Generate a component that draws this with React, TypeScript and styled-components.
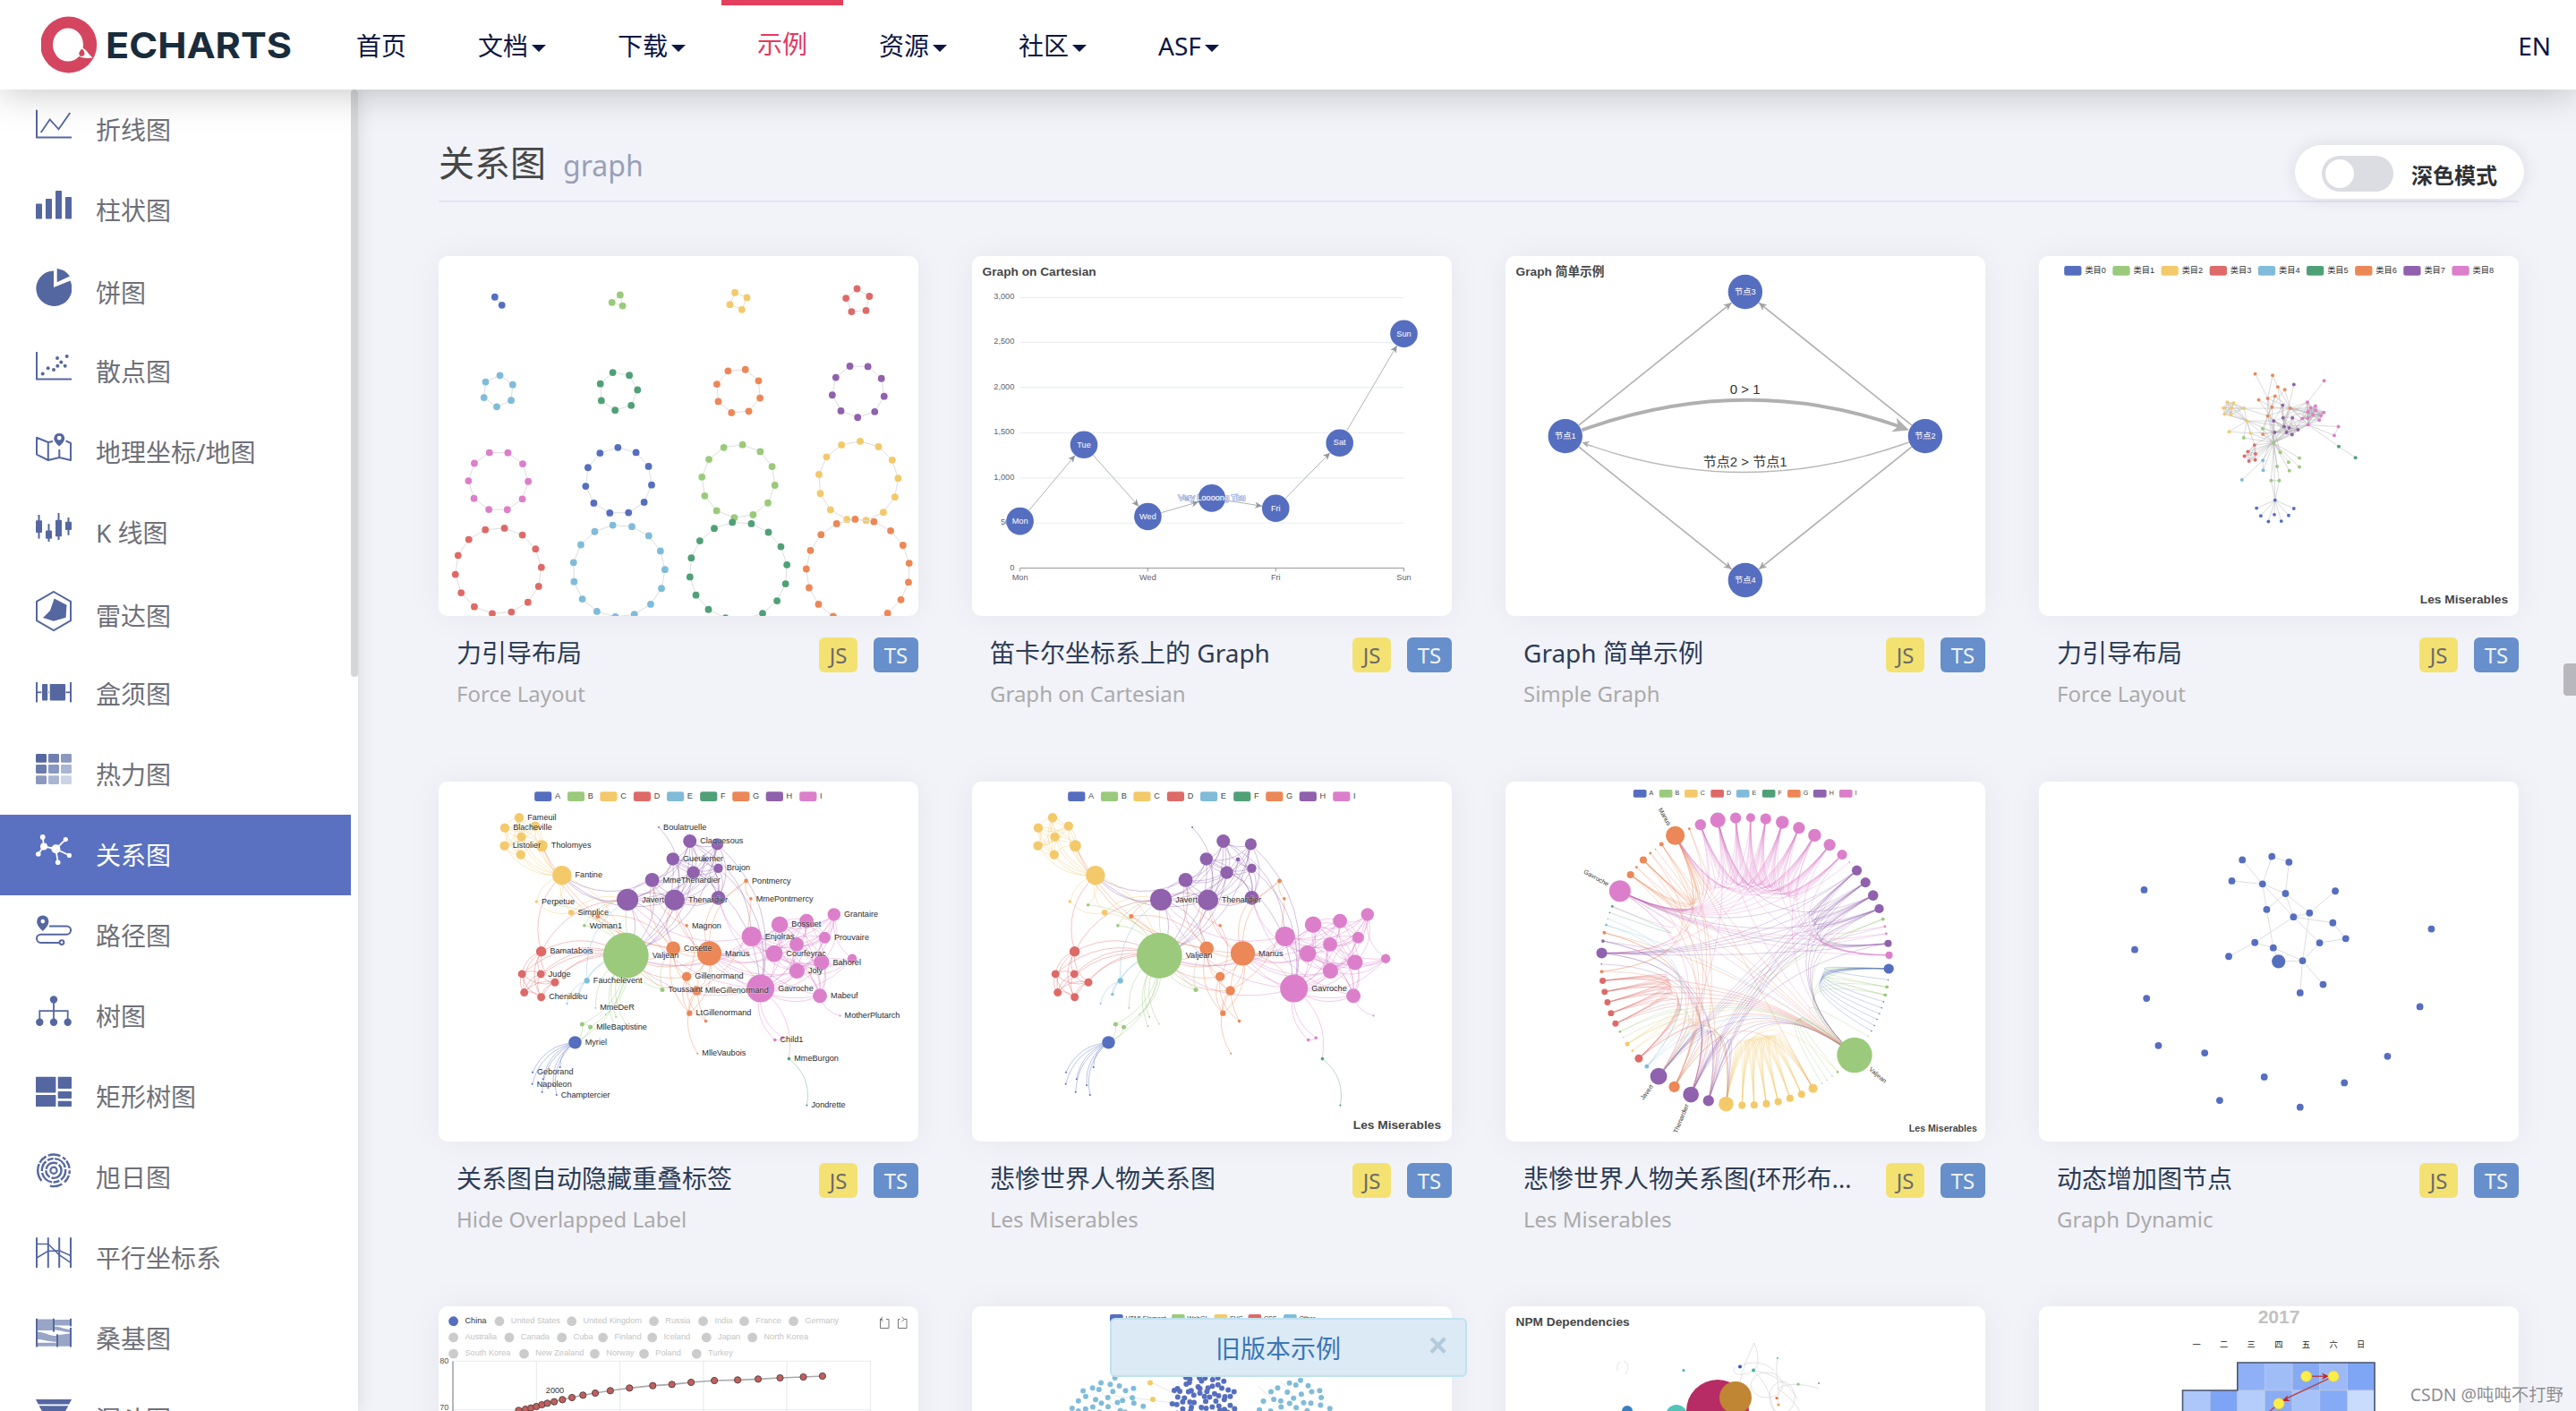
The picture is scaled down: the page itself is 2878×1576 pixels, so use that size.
import React from "react";
import styled, { createGlobalStyle, css } from "styled-components";

const SANS = `"Noto Sans", "Noto Sans CJK SC", sans-serif`;
const CHART_FONT = `"Liberation Sans", "Noto Sans CJK SC", sans-serif`;
const PALETTE = ["#566ebf", "#9bca7c", "#f3c96a", "#de6a68", "#80bcd9", "#50a077", "#ec8757", "#9061ad", "#dc7fca"];
const ICON = "#5567a0";

const GlobalStyle = createGlobalStyle`
  html, body { margin: 0; padding: 0; background: #f2f3f9; overflow: hidden; }
  * { box-sizing: border-box; }
`;

const Page = styled.div`
  display: flex;
  flex-direction: column;
  position: relative;
  width: 2878px;
  height: 1576px;
  overflow: hidden;
  background: #f2f3f9;
  font-family: ${SANS};
`;

/* ---------- header ---------- */

const Header = styled.header`
  display: flex;
  flex: none;
  height: 100px;
  padding: 0 28px 0 46px;
  background: #fff;
  position: relative;
  z-index: 3;
  box-shadow: 0 0 46px rgba(0, 0, 0, 0.26);
`;

const Logo = styled.svg`
  flex: none;
  width: 312px;
  height: 100px;
`;

const Nav = styled.nav`
  display: flex;
  flex: 1;
`;

const NavItem = styled.a<{ $active?: boolean }>`
  display: flex;
  align-items: center;
  height: 100px;
  padding: 2px 40px 0;
  font-size: 28px;
  line-height: 40px;
  letter-spacing: 0;
  color: #0d1642;
  white-space: nowrap;
  ${(p) =>
    p.$active &&
    css`
      color: #e43961;
      padding-top: 0;
      padding-bottom: 8px;
      border-top: 6px solid #e4405e;
    `}
`;

const Caret = styled.i`
  margin: 6px 0 0 4px;
  border: 8px solid transparent;
  border-top-color: currentColor;
  border-bottom: 0;
`;

const Lang = styled.a`
  display: flex;
  align-items: center;
  padding-top: 2px;
  font-size: 28px;
  color: #0d1642;
`;

/* ---------- sidebar ---------- */

const Body = styled.div`
  display: flex;
  flex: 1;
  min-height: 0;
`;

const Sidebar = styled.aside`
  display: flex;
  flex: none;
  width: 400px;
  background: #fff;
  overflow: visible;
  position: relative;
  z-index: 1;
  box-shadow: 0 0 20px rgba(0, 0, 0, 0.12);
`;

const Menu = styled.ul`
  list-style: none;
  margin: 0;
  padding: 0;
  width: 392px;
  height: 1476px;
  overflow: hidden;
`;

const MenuItem = styled.li<{ $active?: boolean; $drop?: number }>`
  display: flex;
  align-items: center;
  height: 90px;
  padding-left: 40px;
  font-size: 28px;
  line-height: 40px;
  color: ${(p) => (p.$active ? "#fff" : "#6e7079")};
  background: ${(p) => (p.$active ? "#5a70c1" : "transparent")};
  span {
    margin-left: 27px;
    padding-top: ${(p) => 2 * (p.$drop || 0)}px;
  }
`;

const MenuIcon = styled.svg`
  flex: none;
  width: 40px;
  height: 90px;
`;

const MenuScroll = styled.div`
  width: 8px;
  height: 656px;
  border-radius: 4px;
  background: #d6d6d6;
`;

/* ---------- content ---------- */

const Main = styled.main`
  flex: 1;
  padding: 0 64px 0 90px;
  min-width: 0;
`;

const SectionTitle = styled.h2`
  display: flex;
  align-items: baseline;
  height: 126px;
  margin: 0 0 60px;
  padding-top: 52px;
  border-bottom: 2px solid #e3e4f3;
  font-weight: 400;
  font-size: 40px;
  line-height: 60px;
  color: #464646;
  small {
    margin-left: 19px;
    font-size: 32px;
    color: #98a0b8;
  }
`;

const Grid = styled.div`
  display: grid;
  grid-template-columns: repeat(4, 536px);
  grid-auto-rows: 586.5px;
  column-gap: 60px;
`;

const Card = styled.article`
  display: flex;
  flex-direction: column;
`;

const Thumb = styled.svg`
  display: block;
  width: 536px;
  height: 402px;
  border-radius: 10px;
  background: #fff;
  box-shadow: 0 0 40px rgba(0, 0, 0, 0.05);
  font-family: ${CHART_FONT};
`;

const Caption = styled.div`
  display: flex;
  align-items: flex-start;
  padding: 24px 0 0 20px;
`;

const Titles = styled.div`
  flex: 1;
  min-width: 0;
`;

const Title = styled.div`
  width: 368px;
  overflow: hidden;
  text-overflow: ellipsis;
  white-space: nowrap;
  font-size: 28px;
  line-height: 38px;
  color: #2c3c55;
  margin-top: -2px;
`;

const Subtitle = styled.div`
  margin-top: 9px;
  font-size: 24px;
  line-height: 36px;
  color: #aaa;
`;

const Badge = styled.span<{ $kind: "js" | "ts" }>`
  flex: none;
  width: ${(p) => (p.$kind === "js" ? 43 : 50)}px;
  height: 39px;
  margin-left: ${(p) => (p.$kind === "js" ? 0 : 18)}px;
  border-radius: 6px;
  font-size: 24px;
  line-height: 39px;
  text-align: center;
  color: ${(p) => (p.$kind === "js" ? "#6b6b6b" : "#f0f3f8")};
  background: ${(p) => (p.$kind === "js" ? "#f3e272" : "#668fcb")};
`;

/* ---------- overlays ---------- */

const DarkMode = styled.label`
  position: absolute;
  left: 2564px;
  top: 162px;
  z-index: 2;
  display: flex;
  align-items: center;
  width: 256px;
  height: 60px;
  padding-left: 30px;
  border-radius: 30px;
  background: #fff;
  box-shadow: 0 0 20px rgba(0, 0, 0, 0.1);
  font-size: 24px;
  font-weight: 600;
  color: #2f3033;
  span {
    margin: 5px 0 0 20px;
  }
`;

const Switch = styled.i`
  width: 80px;
  height: 40px;
  padding: 4px;
  margin-top: 4px;
  border-radius: 20px;
  background: #dcdde2;
  &::after {
    content: "";
    display: block;
    width: 32px;
    height: 32px;
    border-radius: 50%;
    background: #fff;
  }
`;

const PageScroll = styled.div`
  position: absolute;
  right: 0;
  top: 741px;
  width: 14px;
  height: 36px;
  border-radius: 4px 0 0 4px;
  background: #b8b8bc;
`;

const Notice = styled.div`
  position: absolute;
  left: 1240px;
  top: 1472px;
  display: flex;
  align-items: center;
  justify-content: space-between;
  width: 399px;
  height: 66px;
  padding: 0 20px 0 116px;
  border: 2px solid #bfe3ee;
  border-radius: 6px;
  background: #dceaf6;
  font-size: 28px;
  color: #3b77b4;
`;

const Close = styled.b`
  font: 700 36px/40px "Liberation Sans", sans-serif;
  margin-top: -4px;
  color: #b3cadb;
`;

const Watermark = styled.div`
  position: absolute;
  right: 14px;
  top: 1542px;
  font-size: 19.4px;
  line-height: 32px;
  color: #8d8d93;
  text-shadow: 0 0 2px #fff;
  white-space: nowrap;
`;

/* ---------- sidebar icons, each on a 40 x 90 cell ---------- */

const range = (n: number) => Array.from({ length: n }, (_, i) => i);

const HEAT = [
  "#5567a0", "#6e7eb0", "#8b99c1",
  "#6b7bae", "#8797c1", "#a9b5d2",
  "#8b99c1", "#a9b5d2", "#ccd3e4",
];

const icons: Record<string, React.ReactNode> = {
  line: (
    <g fill="none" stroke={ICON} strokeWidth="2">
      <path d="M1 22.8V53.4H40" />
      <path d="M5.7 48 15.7 33.5 25.5 44.3 38.3 26" strokeWidth="1.8" />
    </g>
  ),
  bar: (
    <g fill={ICON}>
      <rect x="0" y="37.5" width="7" height="17" rx=".8" />
      <rect x="11" y="32" width="7" height="22.5" rx=".8" />
      <rect x="22" y="23" width="7" height="31.5" rx=".8" />
      <rect x="33" y="30" width="7" height="24.5" rx=".8" />
    </g>
  ),
  pie: (
    <g fill={ICON}>
      <path d="M20 22.4V41L38.4 33.6A20 19.8 0 1 1 20 22.4Z" />
      <path d="M23.7 20A20.5 20.5 0 0 1 38 28.4L23.7 35.2Z" />
    </g>
  ),
  scatter: (
    <g fill={ICON}>
      <path d="M1 23V53.5H40" fill="none" stroke={ICON} strokeWidth="2" />
      {[[7.7, 47.5], [13.7, 41.2], [20, 43], [24, 30], [28.3, 34.4], [24.3, 38.7], [32.7, 38.7], [34.7, 28]].map(([x, y]) => (
        <circle key={x + "," + y} cx={x} cy={y} r="2" />
      ))}
    </g>
  ),
  map: (
    <g fill="none" stroke={ICON} strokeWidth="2" strokeLinejoin="round">
      <path d="M1 28.8 13.8 34V54L1 47.6ZM13.8 34 19 33M13.8 54 26.3 51 39 54V35L33.5 32.4M26.3 42V51" />
      <path d="M26.2 38.6C22 35 20.3 32.4 20.3 29.3A6 6 0 0 1 32.2 29.3C32.2 32.4 30.4 35 26.2 38.6ZM26.2 26.8A2.4 2.4 0 1 0 26.2 31.6 2.4 2.4 0 1 0 26.2 26.8Z" fill={ICON} fillRule="evenodd" stroke="none" />
    </g>
  ),
  candle: (
    <g fill={ICON}>
      {[[0, 25, 51.6, 31.3, 44.9], [11, 35.2, 55, 42.4, 51.8], [22, 23, 53, 30.8, 49.2], [33, 28, 47.8, 32.7, 42]].map(([x, a, b, c, d]) => (
        <g key={x}>
          <rect x={x + 2.5} y={a} width="2" height={b - a} />
          <rect x={x} y={c} width="7" height={d - c} rx=".8" />
        </g>
      ))}
    </g>
  ),
  radar: (
    <g fill={ICON}>
      <path d="M20 21 39 31.8V53.2L20 64 1 53.2V31.8Z" fill="none" stroke={ICON} strokeWidth="2" />
      <path d="M20.6 28.6 34.5 35.8 33.6 49.8 20 53.8 8 50 16 42Z" />
    </g>
  ),
  box: (
    <g fill={ICON}>
      <rect x="0" y="32" width="2" height="22.4" />
      <rect x="38" y="32" width="2" height="22.4" />
      <rect x="0" y="42.4" width="40" height="1.8" />
      <rect x="6.4" y="33" width="7.6" height="20" fill="#fff" />
      <rect x="7" y="34" width="6.2" height="18.4" rx=".8" />
      <rect x="14.6" y="33" width="19" height="20" fill="#fff" />
      <rect x="15.7" y="34" width="17.4" height="18.4" rx=".8" />
    </g>
  ),
  heat: (
    <g>
      {HEAT.map((c, i) => (
        <rect key={i} x={(i % 3) * 14} y={22 + Math.floor(i / 3) * 12.1} width="12" height="9.8" rx="1.4" fill={c} />
      ))}
    </g>
  ),
  graph: (
    <g fill="#fff" stroke="#fff" strokeWidth="1.8">
      <path d="M7.7 24.7 9 35.4 2.7 44M9 35.4 22.3 38.2 33.3 27.6M22.3 38.2 37.7 45.5M22.3 38.2 24.7 53.2" fill="none" />
      <g stroke="none">
        <circle cx="7.7" cy="24.9" r="2.9" />
        <circle cx="9" cy="35.4" r="4" />
        <circle cx="2.8" cy="44" r="2.8" />
        <circle cx="22.4" cy="38.2" r="5" />
        <circle cx="33.3" cy="27.6" r="2.6" />
        <circle cx="37.4" cy="45.4" r="2.6" />
        <circle cx="24.7" cy="53.2" r="2.8" />
      </g>
    </g>
  ),
  route: (
    <g fill="none" stroke={ICON} strokeWidth="2">
      <path d="M15 34.4H34.4A4.6 4.6 0 0 1 34.4 43.7H5.6A4.6 4.6 0 0 0 5.6 52.9H26.5" />
      <circle cx="29" cy="52.6" r="2.4" />
      <path d="M7.8 40C3.6 36 1.2 33.2 1.2 29A6.6 6.6 0 0 1 14.4 29C14.4 33.2 12 36 7.8 40ZM7.8 26.8A2.3 2.3 0 1 0 7.8 31.4 2.3 2.3 0 1 0 7.8 26.8Z" fill={ICON} fillRule="evenodd" stroke="none" />
    </g>
  ),
  tree: (
    <g fill={ICON}>
      <path d="M20 26V52M4.3 52V39.2H35.7V52" fill="none" stroke={ICON} strokeWidth="1.8" />
      <circle cx="20" cy="26.5" r="4.2" />
      <circle cx="4.3" cy="51.7" r="4.2" />
      <circle cx="20" cy="51.7" r="4.2" />
      <circle cx="35.7" cy="51.7" r="4.2" />
    </g>
  ),
  treemap: (
    <g fill={ICON}>
      <rect x="0" y="22.8" width="22.4" height="17.8" rx=".8" />
      <rect x="0" y="43" width="22.4" height="13" rx=".8" />
      <rect x="24.7" y="22.8" width="15.3" height="13.2" rx=".8" />
      <rect x="24.7" y="39" width="15.3" height="8" rx=".8" />
      <rect x="24.7" y="49.8" width="15.3" height="6.2" rx=".8" />
    </g>
  ),
  sunburst: (
    <g fill="none" stroke={ICON} strokeWidth="2.4">
      <circle cx="20" cy="37.3" r="3.6" strokeWidth="2.2" />
      <circle cx="20" cy="37.3" r="8.6" strokeDasharray="16 2 9 1.5" />
      <circle cx="20" cy="37.3" r="13.2" strokeDasharray="12 2 7 1.5 16 2" />
      <circle cx="20" cy="37.3" r="17.8" strokeDasharray="4 1.6 9 3.4 14 11 20 1.6 10 2.4 14 3" />
    </g>
  ),
  parallel: (
    <g fill="none" stroke={ICON} strokeWidth="2">
      <path d="M1 22.2V56M13.8 22.2V56M26.2 22.2V56M39 22.2V56" />
      <path d="M1 29.5H13.8L26.2 41.6 39 50.4M1 45 13.8 37.4 26.2 36.8 39 42.4" strokeWidth="1.6" />
    </g>
  ),
  sankey: (
    <g>
      <path d="M1 23.5H20V36H1ZM20 24H39V30.6H20ZM1 37.4C10 37.4 14 42 24 42V48.8C14 48.8 10 46 1 46ZM20 31.6C28 31.6 31 35 39 35V38.2C31 38.2 28 35.6 20 35.6ZM24 41.2C30 41.2 33 39.6 39 39.6V53.8H24ZM1 49.8H24V53.8H1Z" fill="#98a5c6" />
      <path d="M1 22.8V54.6M20 22.8V37.4M24 40.2V54.6M39 22.8V31.6M39 33V54.6" stroke={ICON} strokeWidth="2" />
    </g>
  ),
  funnel: (
    <g fill={ICON}>
      <path d="M0 23H40L37.2 28.4H2.8Z" />
      <path d="M3.6 30.2H36.4L32 38H8Z" />
      <path d="M9 40H31L20 56Z" />
    </g>
  ),
};

const MENU: { label: string; icon: string; active?: boolean; drop?: number }[] = [
  { label: "折线图", icon: "line" },
  { label: "柱状图", icon: "bar" },
  { label: "饼图", icon: "pie", drop: 2 },
  { label: "散点图", icon: "scatter" },
  { label: "地理坐标/地图", icon: "map" },
  { label: "K 线图", icon: "candle" },
  { label: "雷达图", icon: "radar", drop: 3 },
  { label: "盒须图", icon: "box" },
  { label: "热力图", icon: "heat" },
  { label: "关系图", icon: "graph", active: true },
  { label: "路径图", icon: "route" },
  { label: "树图", icon: "tree" },
  { label: "矩形树图", icon: "treemap" },
  { label: "旭日图", icon: "sunburst" },
  { label: "平行坐标系", icon: "parallel" },
  { label: "桑基图", icon: "sankey" },
  { label: "漏斗图", icon: "funnel" },
];

/* ---------- chart data ---------- */

type Pt = [number, number];
const project = (ox: number, oy: number, kx: number, ky: number) => (x: number, y: number): Pt => [(x - ox) / kx, (y - oy) / ky];
const top = project(28, 46, 2.8, 2.9037);
const mid = project(28, 35, 2.8, 2.9037);
const topRight = project(26, 342, 2.5705, 2.3403);
const midRight = project(26, 35, 2.5705, 2.9037);

// name, category, radius, free layout x/y, ring layout x/y, force layout x/y
type Person = [string, number, number, number, number, number, number, number, number];
const PEOPLE: Person[] = [
  ["Myriel", 0, 7.2, 455, 881, 1227, 642, 704, 980],
  ["Napoleon", 0, 1, 321, 1016, 1225, 678, 651, 1001],
  ["MlleBaptistine", 1, 2.5, 503, 831, 1221, 701, 693, 929],
  ["MmeMagloire", 1, 2.5, 477, 822, 1216, 727, 716, 929],
  ["CountessDeLo", 0, 1, 408, 961, 1211, 749, 663, 1021],
  ["Geborand", 0, 1, 322, 978, 1205, 769, 685, 1036],
  ["Champtercier", 0, 1, 397, 1051, 1198, 788, 702, 1018],
  ["Cravatte", 0, 1, 355, 1000, 1190, 806, 722, 1035],
  ["Count", 0, 1, 387, 1020, 1182, 826, 743, 1020],
  ["OldMan", 0, 1, 352, 1042, 1173, 844, 758, 1002],
  ["Labarre", 1, 0.8, 551, 791, 1162, 861, 743, 881],
  ["Valjean", 1, 25.4, 614, 599, 1120, 922, 700, 830],
  ["Marguerite", 1, 1.8, 391, 435, 1067, 977, 614, 817],
  ["MmeDeR", 1, 0.9, 519, 769, 1050, 990, 774, 870],
  ["Isabeau", 1, 0.9, 583, 798, 1034, 1003, 774, 893],
  ["Gervais", 1, 0.9, 578, 828, 1018, 1014, 745, 903],
  ["Tholomyes", 2, 6.5, 351, 243, 990, 1030, 615, 740],
  ["Listolier", 2, 5.2, 234, 243, 954, 1049, 567, 724],
  ["Fameuil", 2, 5.2, 280, 152, 918, 1062, 585, 726],
  ["Blacheville", 2, 5.2, 235, 185, 881, 1073, 556, 739],
  ["Favourite", 2, 5.2, 330, 179, 844, 1080, 579, 740],
  ["Dahlia", 2, 5.2, 287, 214, 806, 1084, 559, 755],
  ["Zephine", 2, 5.2, 285, 272, 768, 1085, 577, 757],
  ["Fantine", 2, 10.7, 414, 339, 718, 1081, 623, 773],
  ["MmeThenardier", 7, 7.9, 696, 354, 663, 1070, 700, 773],
  ["Thenardier", 7, 11.4, 766, 419, 608, 1050, 730, 788],
  ["Cosette", 6, 7.9, 762, 576, 556, 1025, 683, 760],
  ["Javert", 7, 12.1, 619, 418, 507, 991, 703, 803],
  ["Fauchelevent", 4, 3.1, 492, 681, 470, 959, 669, 876],
  ["Bamatabois", 3, 5.8, 349, 586, 445, 933, 645, 836],
  ["Perpetue", 2, 1.7, 334, 424, 425, 908, 572, 801],
  ["Simplice", 2, 3.3, 443, 460, 409, 886, 634, 805],
  ["Scaufflaire", 1, 0.8, 613, 821, 396, 865, 710, 892],
  ["Woman1", 1, 1.8, 484, 502, 386, 846, 719, 855],
  ["Judge", 3, 4.5, 348, 659, 372, 820, 626, 853],
  ["Champmathieu", 3, 4.5, 289, 659, 358, 786, 648, 859],
  ["Brevet", 3, 4.5, 392, 686, 347, 751, 616, 865],
  ["Chenildieu", 3, 4.5, 349, 734, 338, 717, 629, 878],
  ["Cochepaille", 3, 4.5, 296, 719, 332, 681, 647, 875],
  ["Pontmercy", 6, 2.4, 990, 357, 329, 651, 712, 684],
  ["Boulatruelle", 7, 1, 717, 183, 328, 627, 758, 678],
  ["Eponine", 7, 7.8, 903, 412, 329, 591, 727, 765],
  ["Anzelma", 7, 2.4, 860, 287, 333, 552, 726, 732],
  ["Woman2", 6, 2.5, 526, 472, 337, 525, 669, 808],
  ["MotherInnocent", 4, 1.7, 467, 725, 343, 500, 670, 902],
  ["Gribier", 4, 1, 430, 755, 348, 480, 609, 927],
  ["Jondrette", 5, 1.1, 1180, 1085, 354, 460, 935, 869],
  ["MmeBurgon", 5, 1.8, 1124, 934, 362, 440, 887, 840],
  ["Gavroche", 8, 15.5, 1035, 706, 386, 390, 799, 783],
  ["Gillenormand", 6, 5.2, 804, 667, 419, 337, 695, 737],
  ["Magnon", 6, 1.8, 804, 502, 438, 313, 657, 718],
  ["MlleGillenormand", 6, 5.2, 836, 713, 459, 289, 683, 714],
  ["MmePontmercy", 6, 1.8, 1005, 415, 481, 267, 697, 654],
  ["MlleVaubois", 6, 1, 838, 917, 497, 254, 647, 650],
  ["LtGillenormand", 6, 3.2, 813, 786, 516, 238, 704, 708],
  ["Marius", 6, 13.6, 875, 592, 559, 210, 748, 740],
  ["BaronessT", 6, 1.8, 864, 812, 603, 188, 732, 691],
  ["Mabeuf", 8, 8, 1221, 730, 638, 175, 797, 724],
  ["Enjolras", 8, 11, 1007, 537, 692, 160, 782, 767],
  ["Combeferre", 8, 7.9, 1148, 563, 748, 153, 798, 766],
  ["Prouvaire", 8, 6.5, 1236, 541, 795, 152, 820, 734],
  ["Feuilly", 8, 7.9, 1179, 487, 842, 156, 806, 739],
  ["Courfeyrac", 8, 9.3, 1078, 593, 894, 167, 798, 749],
  ["Bahorel", 8, 8.6, 1226, 621, 946, 185, 821, 745],
  ["Bossuet", 8, 9.3, 1095, 499, 995, 209, 813, 757],
  ["Joly", 8, 8.6, 1149, 649, 1042, 240, 836, 759],
  ["Grantaire", 8, 7.2, 1265, 466, 1081, 272, 844, 751],
  ["MotherPlutarch", 8, 1, 1284, 794, 1104, 296, 845, 668],
  ["Gueulemer", 7, 7.2, 761, 286, 1127, 323, 737, 803],
  ["Babet", 7, 7.2, 825, 330, 1154, 362, 745, 791],
  ["Claquesous", 7, 7.5, 814, 228, 1178, 404, 753, 809],
  ["Montparnasse", 7, 6.6, 900, 238, 1197, 447, 770, 796],
  ["Toussaint", 1, 2.5, 728, 710, 1209, 481, 668, 793],
  ["Child1", 8, 1.8, 1080, 873, 1215, 505, 886, 788],
  ["Child2", 8, 1.8, 1104, 866, 1219, 528, 874, 811],
  ["Brujon", 7, 5.2, 903, 316, 1225, 560, 754, 765],
  ["MmeHucheloup", 8, 5.2, 1322, 609, 1228, 598, 831, 771],
];

const TARGETS: Record<number, number[]> = {
  1: [0], 2: [0], 3: [0, 2], 4: [0], 5: [0], 6: [0], 7: [0], 8: [0], 9: [0],
  11: [10, 3, 2, 0], 12: [11], 13: [11], 14: [11], 15: [11],
  17: [16], 18: [16, 17], 19: [16, 17, 18], 20: [16, 17, 18, 19], 21: [16, 17, 18, 19, 20],
  22: [16, 17, 18, 19, 20, 21], 23: [16, 17, 18, 19, 20, 21, 22, 12, 11],
  24: [23, 11], 25: [24, 23, 11], 26: [24, 11, 16, 25], 27: [11, 23, 25, 24, 26],
  28: [11, 27], 29: [23, 27, 11], 30: [23], 31: [30, 11, 23, 27], 32: [11], 33: [11, 27],
  34: [11, 29], 35: [11, 34, 29], 36: [35, 34, 11, 29], 37: [34, 35, 36, 11, 29], 38: [34, 35, 36, 37, 11, 29],
  39: [25], 40: [25], 41: [24, 25], 42: [41, 25, 24], 43: [11, 26, 27], 44: [28, 11], 45: [28],
  47: [46], 48: [47, 25, 27, 11], 49: [26, 11], 50: [49, 24], 51: [49, 26, 11], 52: [51, 39], 53: [51],
  54: [51, 49, 26], 55: [51, 49, 39, 54, 26, 11, 16, 25, 41, 48], 56: [49, 55],
  57: [55, 41, 48], 58: [55, 48, 27, 57, 11], 59: [58, 55, 48, 57], 60: [48, 58, 59],
  61: [48, 58, 60, 59, 57, 55], 62: [55, 58, 59, 48, 57, 41, 61, 60], 63: [59, 48, 62, 57, 58, 61, 60, 55],
  64: [55, 62, 48, 63, 58, 61, 60, 59, 57, 11], 65: [63, 64, 48, 62, 58, 61, 60, 59, 57, 55],
  66: [64, 58, 59, 62, 65, 48, 63, 61, 60], 67: [57], 68: [25, 11, 24, 27, 48, 41],
  69: [25, 11, 24, 27, 41, 68], 70: [69, 68, 25, 11, 24, 27, 41, 58],
  71: [27, 69, 68, 70, 11, 48, 41, 25], 72: [26, 27, 11], 73: [48], 74: [48, 73],
  75: [69, 68, 25, 48, 41, 70, 71], 76: [64, 65, 66, 63, 62, 48, 58],
};
const LINKS = Object.entries(TARGETS).flatMap(([s, ts]) => ts.map((t) => [Number(s), t]));

const LABELLED = new Set(
  ("Fameuil Blacheville Listolier Tholomyes Fantine Perpetue Simplice Woman1 Bamatabois Judge Chenildieu Fauchelevent MmeDeR " +
    "MlleBaptistine Myriel Geborand Napoleon Champtercier Toussaint MlleGillenormand Gillenormand LtGillenormand MlleVaubois " +
    "Cosette Valjean Marius Magnon Javert Thenardier MmeThenardier Brujon Gueulemer Claquesous Boulatruelle Pontmercy " +
    "MmePontmercy Grantaire Bossuet Enjolras Prouvaire Courfeyrac Joly Bahorel Gavroche Mabeuf MotherPlutarch Child1 MmeBurgon Jondrette").split(" ")
);
const MAJOR = new Set(["Valjean", "Javert", "Thenardier", "Marius", "Gavroche"]);

/* ---------- charts ---------- */

const ChartTitle = styled.text`
  font-weight: 700;
  fill: #464646;
`;

const RINGS: { n: number; r: number; c: Pt; a: Pt }[] = [
  { n: 2, r: 6, c: [215, 192], a: [204, 179] },
  { n: 3, r: 7.2, c: [590, 192], a: [596, 172] },
  { n: 4, r: 10.3, c: [966, 192], a: [955, 164] },
  { n: 5, r: 13.8, c: [1340, 192], a: [1337, 152] },
  { n: 6, r: 17.6, c: [215, 484], a: [220, 433] },
  { n: 7, r: 21.6, c: [590, 484], a: [573, 424] },
  { n: 8, r: 25.3, c: [966, 484], a: [988, 413] },
  { n: 9, r: 29.4, c: [1341, 484], a: [1339, 570] },
  { n: 10, r: 33.4, c: [215, 776], a: [309, 777] },
  { n: 11, r: 37.2, c: [591, 775], a: [589, 667] },
  { n: 12, r: 41, c: [966, 776], a: [979, 657] },
  { n: 13, r: 44.6, c: [1341, 776], a: [1347, 646] },
  { n: 14, r: 48.2, c: [215, 1067], a: [234, 929] },
  { n: 15, r: 51.5, c: [592, 1067], a: [573, 919] },
  { n: 16, r: 54.6, c: [966, 1067], a: [947, 910] },
  { n: 17, r: 57.8, c: [1340, 1067], a: [1331, 900] },
];

const RingsChart = () => (
  <Thumb viewBox="0 0 536 402">
    {RINGS.map(({ n, r, c, a }, k) => {
      const [cx, cy] = top(...c);
      const [ax, ay] = top(...a);
      const start = Math.atan2(ay - cy, ax - cx);
      const pts = range(n).map((i) => {
        const t = start + (i * 2 * Math.PI) / n;
        return [cx + r * Math.cos(t), cy + r * Math.sin(t)];
      });
      return (
        <g key={n} fill={PALETTE[k % 9]}>
          <polygon points={pts.map((p) => p.join(",")).join(" ")} fill="none" stroke="#ddd" strokeWidth="1" />
          {pts.map(([x, y], i) => (
            <circle key={i} cx={x} cy={y} r="3.9" />
          ))}
        </g>
      );
    })}
  </Thumb>
);

const Arrow = ({ x, y, angle, size, fill }: { x: number; y: number; angle: number; size: number; fill: string }) => (
  <path
    d={`M0 0L${-size} ${-size * 0.46}L${-size * 0.72} 0L${-size} ${size * 0.46}Z`}
    transform={`translate(${x} ${y}) rotate(${angle})`}
    fill={fill}
  />
);

const WEEK: [string, number, number][] = [
  ["Mon", 178, 906], ["Tue", 378, 658], ["Wed", 578, 891], ["Very Loooong Thu", 778, 831],
  ["Fri", 978, 864], ["Sat", 1178, 652], ["Sun", 1379, 298],
];
const Y_TICKS: [string, number][] = [
  ["3,000", 181], ["2,500", 326], ["2,000", 472], ["1,500", 619], ["1,000", 766], ["500", 912], ["0", 1058],
];
const X_TICKS: [string, number][] = [["Mon", 53.6], ["Wed", 196.4], ["Fri", 339.3], ["Sun", 482.5]];

const trimmed = (a: Pt, b: Pt, r: number) => {
  const d = Math.hypot(b[0] - a[0], b[1] - a[1]);
  const u: Pt = [(b[0] - a[0]) / d, (b[1] - a[1]) / d];
  return {
    from: [a[0] + u[0] * r, a[1] + u[1] * r] as Pt,
    to: [b[0] - u[0] * r, b[1] - u[1] * r] as Pt,
    angle: (Math.atan2(u[1], u[0]) * 180) / Math.PI,
  };
};

const CartesianChart = () => (
  <Thumb viewBox="0 0 536 402" fontSize="9.2">
    <ChartTitle x="11.6" y="22.4" fontSize="13.7">Graph on Cartesian</ChartTitle>
    {Y_TICKS.map(([label, v]) => {
      const y = top(0, v)[1];
      return (
        <g key={label}>
          <line x1="53.6" x2="482.5" y1={y} y2={y} stroke={label === "0" ? "#999" : "#ebedf2"} strokeWidth="1.2" />
          <text x="47.3" y={y + 2} textAnchor="end" fill="#5f616a">{label}</text>
        </g>
      );
    })}
    {X_TICKS.map(([d, x]) => (
      <g key={d}>
        <line x1={x} x2={x} y1="348.5" y2="352.4" stroke="#999" />
        <text x={x} y="361.8" textAnchor="middle" fill="#5f616a">{d}</text>
      </g>
    ))}
    {WEEK.slice(1).map(([d, x, y], i) => {
      const t = trimmed(top(WEEK[i][1], WEEK[i][2]), top(x, y), 15.4);
      return (
        <g key={d}>
          <line x1={t.from[0]} y1={t.from[1]} x2={t.to[0]} y2={t.to[1]} stroke="#b0b2b2" strokeWidth="1" />
          <Arrow x={t.to[0]} y={t.to[1]} angle={t.angle} size={8} fill="#8f989e" />
        </g>
      );
    })}
    {WEEK.map(([d, x, y]) => {
      const [cx, cy] = top(x, y);
      return (
        <g key={d}>
          <circle cx={cx} cy={cy} r="15.3" fill={PALETTE[0]} />
          <text x={cx} y={cy + 2.8} textAnchor="middle" fill="#fff" stroke={d.length > 3 ? "#7488cb" : "none"} strokeWidth="1.2" paintOrder="stroke">{d}</text>
        </g>
      );
    })}
  </Thumb>
);

const SIMPLE: [string, number, number][] = [["节点3", 778, 162], ["节点1", 215, 630], ["节点2", 1341, 630], ["节点4", 778, 1097]];

const SimpleChart = () => (
  <Thumb viewBox="0 0 536 402" fontSize="9.2">
    <ChartTitle x="11.6" y="22.4" fontSize="13.7">Graph 简单示例</ChartTitle>
    {[[1, 0], [2, 0], [1, 3], [2, 3]].map(([a, b]) => {
      const t = trimmed(top(SIMPLE[a][1], SIMPLE[a][2]), top(SIMPLE[b][1], SIMPLE[b][2]), 19.4);
      return (
        <g key={a + "-" + b}>
          <line x1={t.from[0]} y1={t.from[1]} x2={t.to[0]} y2={t.to[1]} stroke="#b0b0b0" strokeWidth="1.6" />
          <Arrow x={t.to[0]} y={t.to[1]} angle={t.angle} size={9} fill="#a4a4a4" />
        </g>
      );
    })}
    <path d="M85.4 194.4Q268 129 442 191" fill="none" stroke="#b0b0b0" strokeWidth="3.9" />
    <Arrow x={451} y={194.4} angle={19} size={18} fill="#b0b0b0" />
    <path d="M450.7 208Q268 274 90 210" fill="none" stroke="#b8b8b8" strokeWidth="1.4" />
    <Arrow x={85.5} y={208} angle={198} size={8} fill="#a8a8a8" />
    <g fontSize="15" textAnchor="middle" fill="#333">
      <text x="267.6" y="154.2">0 &gt; 1</text>
      <text x="267.6" y="234.8">节点2 &gt; 节点1</text>
    </g>
    {SIMPLE.map(([d, x, y]) => {
      const [cx, cy] = top(x, y);
      return (
        <g key={d}>
          <circle cx={cx} cy={cy} r="19.2" fill={PALETTE[0]} />
          <text x={cx} y={cy + 2.8} textAnchor="middle" fill="#fff">{d}</text>
        </g>
      );
    })}
  </Thumb>
);

const ForceChart = () => {
  const pts = PEOPLE.map((p) => topRight(p[7], p[8]));
  return (
    <Thumb viewBox="0 0 536 402" fontSize="9.2">
      {range(9).map((i) => (
        <g key={i}>
          <rect x={28.2 + i * 54.15} y="11" width="19.3" height="10.8" rx="2.4" fill={PALETTE[i]} />
          <text x={51.4 + i * 54.15} y="19.2" fill="#333">类目{i}</text>
        </g>
      ))}
      <g stroke="#aaa" strokeOpacity=".6" strokeWidth=".75">
        {LINKS.map(([s, t]) => (
          <line key={s + "-" + t} x1={pts[s][0]} y1={pts[s][1]} x2={pts[t][0]} y2={pts[t][1]} />
        ))}
      </g>
      {PEOPLE.map((p, i) => (
        <circle key={p[0]} cx={pts[i][0]} cy={pts[i][1]} r="1.95" fill={PALETTE[p[1]]} />
      ))}
      <ChartTitle x="524" y="388" fontSize="13.7" textAnchor="end">Les Miserables</ChartTitle>
    </Thumb>
  );
};

const LEGEND_X = [328, 431, 533, 638, 742, 846, 947, 1052, 1157];
const LEGEND_SMALL_X = [428, 509, 588, 670, 750, 831, 910, 991, 1072];

const LettersLegend = ({ small }: { small?: boolean }) => (
  <g fontSize={small ? 7.1 : 9.2} fill="#444">
    {(small ? LEGEND_SMALL_X : LEGEND_X).map((x, i) => (
      <g key={x}>
        <rect x={(x - 28) / 2.8} y={small ? 9 : 11.3} width={small ? 14.7 : 19.2} height={small ? 8.8 : 10.8} rx={small ? 1.8 : 2.4} fill={PALETTE[i]} />
        <text x={(x - 28) / 2.8 + (small ? 17.7 : 22.8)} y={small ? 15.2 : 19.3}>{"ABCDEFGHI"[i]}</text>
      </g>
    ))}
  </g>
);

const FreeChart = ({ all }: { all?: boolean }) => {
  const pts = PEOPLE.map((p) => mid(p[3], p[4]));
  return (
    <Thumb viewBox="0 0 536 402" fontSize="9.15">
      <LettersLegend />
      <g fill="none" strokeWidth=".8" strokeOpacity=".5">
        {LINKS.map(([s, t]) => {
          const [x1, y1] = pts[s];
          const [x2, y2] = pts[t];
          const cx = (x1 + x2) / 2 - (y1 - y2) * 0.3;
          const cy = (y1 + y2) / 2 - (x2 - x1) * 0.3;
          return <path key={s + "-" + t} d={`M${x1} ${y1}Q${cx} ${cy} ${x2} ${y2}`} stroke={PALETTE[PEOPLE[s][1]]} />;
        })}
      </g>
      {PEOPLE.map((p, i) => (
        <circle key={p[0]} cx={pts[i][0]} cy={pts[i][1]} r={p[2]} fill={PALETTE[p[1]]} />
      ))}
      <g fill="#2b2b2b" stroke="#fff" strokeOpacity=".4" strokeWidth="1.1" paintOrder="stroke">
        {PEOPLE.map((p, i) =>
          (all ? LABELLED : MAJOR).has(p[0]) ? (
            <text key={p[0]} x={pts[i][0] + p[2] + 4} y={pts[i][1] + 2.7}>{p[0]}</text>
          ) : null
        )}
      </g>
      {!all && <ChartTitle x="524" y="387.6" fontSize="13.7" textAnchor="end">Les Miserables</ChartTitle>}
    </Thumb>
  );
};

const CircularChart = () => {
  const pts = PEOPLE.map((p) => mid(p[5], p[6]));
  const [cx, cy] = mid(778, 618.5);
  return (
    <Thumb viewBox="0 0 536 402" fontSize="7.1">
      <LettersLegend small />
      <g fill="none" strokeWidth=".6" strokeOpacity=".5">
        {LINKS.map(([s, t]) => {
          const [x1, y1] = pts[s];
          const [x2, y2] = pts[t];
          const qx = cx * 0.9 + ((x1 + x2) / 2) * 0.1;
          const qy = cy * 0.9 + ((y1 + y2) / 2) * 0.1;
          return <path key={s + "-" + t} d={`M${x1} ${y1}Q${qx} ${qy} ${x2} ${y2}`} stroke={PALETTE[PEOPLE[s][1]]} />;
        })}
      </g>
      {PEOPLE.map((p, i) => (
        <circle key={p[0]} cx={pts[i][0]} cy={pts[i][1]} r={p[2] * 0.775} fill={PALETTE[p[1]]} />
      ))}
      {PEOPLE.map((p, i) => {
        if (!MAJOR.has(p[0])) return null;
        const [x, y] = pts[i];
        const left = x < cx;
        const deg = (Math.atan2(y - cy, x - cx) * 180) / Math.PI;
        const gap = p[2] * 0.775 + 3;
        return (
          <text key={p[0]} transform={`translate(${x} ${y}) rotate(${left ? deg + 180 : deg})`} x={left ? -gap : gap} y="2.4" textAnchor={left ? "end" : "start"} fill="#333">
            {p[0]}
          </text>
        );
      })}
      <ChartTitle x="526.8" y="391.2" fontSize="10.6" textAnchor="end">Les Miserables</ChartTitle>
    </Thumb>
  );
};

const DYN: Pt[] = [
  [610, 289], [695, 278], [744, 296], [580, 357], [668, 367], [734, 398], [680, 450], [757, 474], [803, 461], [877, 390],
  [870, 493], [907, 544], [832, 558], [783, 616], [699, 574], [646, 557], [571, 602], [714, 618], [842, 693], [776, 720],
  [328, 386], [1153, 513], [301, 580], [335, 738], [1120, 765], [369, 891], [502, 915], [1027, 926], [673, 993], [903, 1012],
  [545, 1069], [776, 1091],
];
const DYN_LINKS = [
  [0, 4], [1, 4], [1, 2], [2, 5], [3, 4], [4, 5], [4, 6], [4, 7], [5, 6], [5, 7], [5, 8], [7, 8], [8, 9], [7, 10], [10, 11],
  [11, 12], [12, 7], [12, 13], [8, 13], [13, 14], [14, 15], [15, 16], [15, 7], [6, 14], [14, 17], [17, 13], [13, 18], [13, 19],
];

const DynamicChart = () => {
  const pts = DYN.map((p) => midRight(...p));
  return (
    <Thumb viewBox="0 0 536 402">
      {DYN_LINKS.map(([a, b]) => (
        <line key={a + "-" + b} x1={pts[a][0]} y1={pts[a][1]} x2={pts[b][0]} y2={pts[b][1]} stroke="#dedede" strokeWidth="1" />
      ))}
      {pts.map(([x, y], i) => (
        <circle key={i} cx={x} cy={y} r={i === 17 ? 7.6 : 3.9} fill={PALETTE[0]} />
      ))}
    </Thumb>
  );
};

const COUNTRIES: [string, number, number][] = [
  ["China", 276, 0], ["United States", 304, 0], ["United Kingdom", 348, 0], ["Russia", 398, 0], ["India", 428, 0], ["France", 453, 0], ["Germany", 483, 0],
  ["Australia", 276, 1], ["Canada", 310, 1], ["Cuba", 342, 1], ["Finland", 367, 1], ["Iceland", 397, 1], ["Japan", 430, 1], ["North Korea", 458, 1],
  ["South Korea", 276, 2], ["New Zealand", 319, 2], ["Norway", 362, 2], ["Poland", 392, 2], ["Turkey", 424, 2],
];
const LIFE: Pt[] = [
  [65, 406], [70, 402], [74, 398], [78, 393], [82, 387], [86, 382], [91, 377], [97, 370], [104, 363], [112, 355], [121, 348], [132, 340],
  [146, 331], [163, 323], [177, 319], [191, 312], [208, 306], [225, 304], [240, 301], [256, 297], [273, 294], [287, 291],
];

const LifeChart = () => {
  const pts = LIFE.map(([x, y]) => [x / 0.6539 - 10, y / 3 - 19]);
  return (
    <Thumb viewBox="0 0 536 402" fontSize="9.2">
      {COUNTRIES.map(([name, x, row]) => {
        const on = name === "China";
        const px = x * 1.8355 - 490;
        return (
          <g key={name} fill={on ? "#333" : "#c4c4c4"}>
            <circle cx={px} cy={16.7 + row * 18.2} r="5.4" fill={on ? PALETTE[0] : "#ccc"} />
            <text x={px + 12.8} y={19 + row * 18.2}>{name}</text>
          </g>
        );
      })}
      <g fill="none" stroke="#777" strokeWidth="1">
        <path d="M496 14.5H493.5V24.5H503V14.5H500M496.5 12 493.5 14.5 496.5 17" />
        <path d="M515.5 14.5H513.5V24.5H523V14.5H520M517.5 12 520.5 14.5 517.5 17" />
      </g>
      <g stroke="#e6eaf0" strokeWidth="1.1">
        {[109.3, 202.6, 295.9, 389, 482.4].map((x) => (
          <line key={x} x1={x} x2={x} y1="61.3" y2="402" />
        ))}
        <line x1="16" x2="482.4" y1="61.3" y2="61.3" />
        <line x1="16" x2="482.4" y1="115.7" y2="115.7" />
      </g>
      <line x1="16" x2="16" y1="61.3" y2="402" stroke="#6e7079" />
      <text x="11.4" y="63.5" textAnchor="end" fill="#555">80</text>
      <text x="11.4" y="116" textAnchor="end" fill="#555">70</text>
      <polyline points={pts.map((p) => p.join(",")).join(" ")} fill="none" stroke="#aaa" strokeWidth="1.6" />
      {pts.map(([x, y], i) => (
        <circle key={i} cx={x} cy={y} r="3.6" fill="#c0605c" stroke="#5d4344" strokeWidth="1" />
      ))}
      <text x="130" y="97" textAnchor="middle" fill="#333">2000</text>
    </Thumb>
  );
};

const cluster = (cx: number, cy: number, n: number, spread: number, seed: number) =>
  range(n).map((i) => {
    const a = i * 2.39996;
    const r = spread * Math.sqrt((i + 0.5) / n);
    return [cx + r * Math.cos(a) + 1.8 * Math.sin(i * 5.1 + seed), cy + r * Math.sin(a) + 1.8 * Math.cos(i * 3.7 + seed)];
  });

const WEBKIT_LEGEND: [string, number][] = [["HTMLElement", 154], ["WebGL", 223], ["SVG", 270.5], ["CSS", 308.5], ["Other", 348]];

const WebkitChart = () => (
  <Thumb viewBox="0 0 536 402" fontSize="7.1">
    {WEBKIT_LEGEND.map(([t, x], c) => (
      <g key={t}>
        <rect x={x} y="9" width="14.7" height="8.8" rx="2" fill={PALETTE[c]} />
        <text x={x + 17.5} y="15.6" fill="#333">{t}</text>
      </g>
    ))}
    <g stroke="#ddd" strokeWidth=".7">
      <path d="M160 100 258 112M320 90 360 125M258 112 200 85M140 90 170 125M345 84 380 120M258 80V125" />
    </g>
    <g fill={PALETTE[4]}>
      {cluster(153, 122, 60, 43, 1).map(([x, y], i) => <circle key={i} cx={x} cy={y} r="3" />)}
      {cluster(362, 124, 60, 44, 2).map(([x, y], i) => <circle key={i} cx={x} cy={y} r="3" />)}
    </g>
    <g fill={PALETTE[0]}>
      {cluster(258, 108, 84, 36, 3).map(([x, y], i) => <circle key={i} cx={x} cy={y} r="3" />)}
    </g>
    <circle cx="199" cy="85.5" r="3" fill={PALETTE[2]} />
    <circle cx="202" cy="104" r="3" fill={PALETTE[2]} />
  </Thumb>
);

const NpmChart = () => (
  <Thumb viewBox="0 0 536 402">
    <ChartTitle x="11.6" y="22.4" fontSize="13.7">NPM Dependencies</ChartTitle>
    <g fill="none" stroke="#d4d4d4" strokeWidth=".7">
      <path d="M262 84C266 66 272 54 278 41M278 41C284 56 283 68 277 72M262 67C270 62 288 60 300 72M277 72C296 74 318 86 326 104M304 58C300 74 308 92 304 110M277 72C290 84 296 98 300 117" />
      <path d="M128 62C124 66 124 70 126 72M132 61C138 64 138 70 134 76M256 68C252 76 262 80 277 72M304 92C318 84 338 88 350 92M304 92C316 100 326 110 330 120" />
      <ellipse cx="309" cy="102" rx="14" ry="18" />
      <ellipse cx="292" cy="88" rx="18" ry="14" />
    </g>
    <circle cx="237" cy="117" r="35" fill="#b72c64" />
    <circle cx="257" cy="102" r="18" fill="#c08633" />
    <circle cx="191" cy="122" r="12" fill="#53c3b8" />
    <circle cx="136" cy="117" r="6" fill="#3a7fbd" />
    <circle cx="262" cy="67.4" r="2" fill="#3b50a8" />
    <circle cx="277" cy="71.6" r="2" fill="#3fb3a8" />
    <circle cx="199" cy="71.6" r="1.5" fill="#3fb3a8" />
    <circle cx="304" cy="58" r="1.2" fill="#7ccabf" />
    <circle cx="327" cy="87" r="1.6" fill="#7cc47c" />
    <circle cx="303" cy="102.6" r="1.6" fill="#e2763f" />
    <circle cx="305" cy="110" r="1.6" fill="#d9a93a" />
    <circle cx="350" cy="86" r="1" fill="#c76ba0" />
  </Thumb>
);

const DAYS: [number, number, string][] = [
  [2, 0, "#8fb0f6"], [3, 0, "#a0bdf8"], [4, 0, "#86a9f4"], [5, 0, "#9dbaf7"], [6, 0, "#7fa5f5"],
  [0, 1, "#adc7fa"], [1, 1, "#7ea4f5"], [2, 1, "#b5cdfb"], [3, 1, "#8aacf5"], [4, 1, "#a6c2f9"], [5, 1, "#86aaf5"], [6, 1, "#cadcfd"],
];

const CalendarChart = () => (
  <Thumb viewBox="0 0 536 402" fontSize="9.2">
    <text x="268" y="18.5" fontSize="21" fontWeight="700" textAnchor="middle" fill="#c2c2c2">2017</text>
    {"一二三四五六日".split("").map((d, i) => (
      <text key={d} x={176 + i * 30.6} y="46" textAnchor="middle" fill="#222">{d}</text>
    ))}
    {DAYS.map(([col, row, fill]) => (
      <rect key={col + "-" + row} x={160.5 + col * 30.65} y={63 + row * 31} width="30.65" height="31" fill={fill} stroke="#b9c6e0" strokeWidth=".8" />
    ))}
    <path d="M160.5 125V94H221.8V63H375V125" fill="none" stroke="#4a566e" strokeWidth="1.6" />
    <path d="M299 78.3H322M329 78.3 270 106M268 109 248 125" fill="none" stroke="#b5474f" strokeWidth="1.4" />
    <Arrow x={324} y={78.3} angle={0} size={8} fill="#c0272d" />
    <Arrow x={272} y={106} angle={155} size={8} fill="#c0272d" />
    <g fill="#fdee4a" stroke="#e2d23a" strokeWidth=".6">
      <circle cx="298.6" cy="78.3" r="6" />
      <circle cx="329" cy="78.3" r="6" />
      <circle cx="268" cy="108.7" r="6" />
    </g>
  </Thumb>
);

const CARDS: { title: string; sub: string; chart: React.ReactNode }[] = [
  { title: "力引导布局", sub: "Force Layout", chart: <RingsChart /> },
  { title: "笛卡尔坐标系上的 Graph", sub: "Graph on Cartesian", chart: <CartesianChart /> },
  { title: "Graph 简单示例", sub: "Simple Graph", chart: <SimpleChart /> },
  { title: "力引导布局", sub: "Force Layout", chart: <ForceChart /> },
  { title: "关系图自动隐藏重叠标签", sub: "Hide Overlapped Label", chart: <FreeChart all /> },
  { title: "悲惨世界人物关系图", sub: "Les Miserables", chart: <FreeChart /> },
  { title: "悲惨世界人物关系图(环形布局)", sub: "Les Miserables", chart: <CircularChart /> },
  { title: "动态增加图节点", sub: "Graph Dynamic", chart: <DynamicChart /> },
];

const NAV: { label: string; caret?: boolean; active?: boolean }[] = [
  { label: "首页" },
  { label: "文档", caret: true },
  { label: "下载", caret: true },
  { label: "示例", active: true },
  { label: "资源", caret: true },
  { label: "社区", caret: true },
  { label: "ASF", caret: true },
];

export default function App() {
  return (
    <Page>
      <GlobalStyle />
      <Header>
        <Logo viewBox="46 0 312 100">
          <circle cx="76.7" cy="50" r="31.5" fill="#d4455f" />
          <ellipse cx="76" cy="50" rx="17" ry="18.6" fill="#fff" />
          <path d="M91 53C97 55 98 60 103.5 64.5 97 65.500 92 65 86 62Z" fill="#fff" />
          <path d="M91.500 54.500C95.500 58 95.500 62 91.500 63 87.500 63 87 58.500 91.500 54.500Z" fill="#d4455f" />
          <text x="118" y="65" fontSize="40" fontWeight="700" fontFamily="Inter, sans-serif" textLength="208" lengthAdjust="spacingAndGlyphs" fill="#182c3c">
            ECHARTS
          </text>
        </Logo>
        <Nav>
          {NAV.map((n) => (
            <NavItem key={n.label} $active={n.active}>
              {n.label}
              {n.caret && <Caret />}
            </NavItem>
          ))}
        </Nav>
        <Lang>EN</Lang>
      </Header>
      <Body>
        <Sidebar>
          <Menu>
            {MENU.map((m) => (
              <MenuItem key={m.label} $active={m.active} $drop={m.drop}>
                <MenuIcon viewBox="0 0 40 90">{icons[m.icon]}</MenuIcon>
                <span>{m.label}</span>
              </MenuItem>
            ))}
          </Menu>
          <MenuScroll />
        </Sidebar>
        <Main>
          <SectionTitle>
            关系图<small>graph</small>
          </SectionTitle>
          <Grid>
            {CARDS.map((c, i) => (
              <Card key={i}>
                {c.chart}
                <Caption>
                  <Titles>
                    <Title>{c.title}</Title>
                    <Subtitle>{c.sub}</Subtitle>
                  </Titles>
                  <Badge $kind="js">JS</Badge>
                  <Badge $kind="ts">TS</Badge>
                </Caption>
              </Card>
            ))}
            <Card><LifeChart /></Card>
            <Card><WebkitChart /></Card>
            <Card><NpmChart /></Card>
            <Card><CalendarChart /></Card>
          </Grid>
        </Main>
      </Body>
      <DarkMode>
        <Switch />
        <span>深色模式</span>
      </DarkMode>
      <PageScroll />
      <Notice>
        旧版本示例
        <Close>×</Close>
      </Notice>
      <Watermark>CSDN @吨吨不打野</Watermark>
    </Page>
  );
}
